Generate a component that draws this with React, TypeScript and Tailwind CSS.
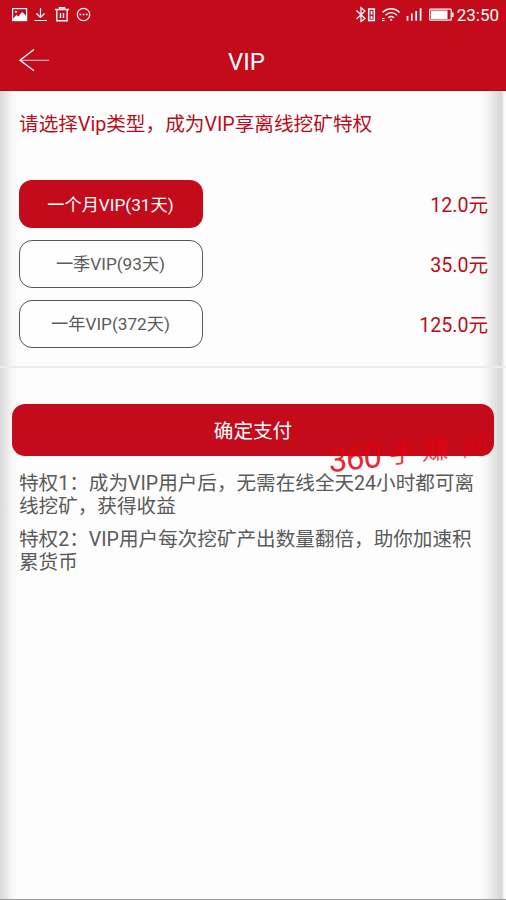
const plans = [
  { name: '一个月VIP(31天)', price: '12.0元', active: true },
  { name: '一季VIP(93天)', price: '35.0元', active: false },
  { name: '一年VIP(372天)', price: '125.0元', active: false },
];

function StatusBar() {
  return (
    <div className="flex h-[30px] items-center justify-between pr-[7px] pl-3 text-white">
      <svg width="80" height="30" viewBox="12 0 80 30" fill="none" stroke="#fff" strokeWidth="1.2">
        <rect x="12.6" y="8.6" width="14" height="12" />
        <path d="M13 19l3.5-4 2 1.5 3.5-4.5 1.5 1 2.5 3v4H13z" fill="#fff" stroke="none" />
        <path d="M15 11h2v1.5h-2z" fill="#fff" stroke="none" />
        <path d="M40.5 8v9M36.5 13.500l4 4 4-4M34.500 20.500h12.500" />
        <path d="M55 9.500h14M59.500 9.500V7.700h5v1.800M56.800 10v10.800h10.400V10M60.500 13v5M63.500 13v5" strokeWidth="1.4" />
        <circle cx="83.500" cy="14.500" r="6.200" />
        <path d="M79.500 14.500h1.700M82.700 14.500h1.700M85.900 14.500h1.700" strokeWidth="1.600" />
      </svg>
      <div className="flex items-center">
        <svg width="100" height="30" viewBox="355 0 100 30" fill="none" stroke="#fff" strokeWidth="1.200">
          <path d="M356.500 10.500l8.500 8-4 3V7.500l4 3.500-8.500 8" />
          <rect x="368.700" y="9" width="5.600" height="11.500" strokeWidth="1.500" />
          <path d="M371.500 11v3.500M371.500 16v3" strokeWidth="1.800" />
          <path d="M382.500 12.500c5-5 12.500-5 17 0M385.500 15.200c3.500-3.300 8-3.300 11.500 0M388.300 17.800c1.800-1.600 3.800-1.600 5.600 0" strokeWidth="1.500" />
          <circle cx="391.200" cy="19.800" r="1.100" fill="#fff" stroke="none" />
          <path d="M382 18.500h2.500M382 20.500h2.500" />
          <path d="M407.500 16v4.700M411.800 13.500v7.200M416.200 11v9.700M420.600 8.300v12.400" strokeWidth="1.700" />
          <rect x="429.700" y="9.200" width="21.500" height="11" rx="0.800" />
          <path d="M431 10.500h16.500v8.500H431z" fill="#fff" stroke="none" />
          <path d="M452.800 12.500v4.500" strokeWidth="1.500" />
        </svg>
        <span className="ml-[2px] text-[17px] leading-none">23:50</span>
      </div>
    </div>
  );
}

function Watermark() {
  return (
    <div
      aria-hidden="true"
      className="pointer-events-none absolute top-[70px] left-[331px] flex origin-bottom-left rotate-[-6deg] items-center text-[#e8000a]"
    >
      <span className="text-[33px] leading-[44px] tracking-[-1px] opacity-85 -skew-x-3">360</span>
      <span className="ml-[8px] text-[26px] leading-[46px] opacity-80 -skew-x-6">手</span>
      <span className="ml-[7px] text-[27px] leading-[46px] opacity-75 -skew-x-6">赚</span>
      <span className="ml-[13px] text-[26px] leading-[44px] opacity-60 -skew-x-6">网</span>
    </div>
  );
}

export default function App() {
  return (
    <div className="flex h-[900px] w-[506px] flex-col overflow-hidden bg-[#fdfdfd] font-[Roboto,'Noto_Sans_CJK_SC',sans-serif] text-[19.6px] text-[#5a5a5a]">
      <header className="h-[91px] shrink-0 border-b border-[#a90b19] bg-[#c40b1b] text-white">
        <StatusBar />
        <div className="grid h-[60px] grid-cols-3 items-center">
          <svg className="ml-[18px]" width="32" height="24" viewBox="18 48 32 24" fill="none" stroke="#fff">
            <path d="M34 49.500L20 60.300l14 10.500" strokeWidth="1.300" />
            <path d="M20 60.300h29" strokeWidth="1" opacity=".8" />
          </svg>
          <h1 className="pt-[3px] pr-[13px] text-center text-[24px] leading-none">VIP</h1>
        </div>
      </header>
      <main className="flex grow flex-col border-b border-[#999] bg-[linear-gradient(to_right,#dadada_0px,#e4e4e4_5px,#f6f6f6_12px,#fdfdfd_18px,#fdfdfd_480px,#f5f5f5_487px,#e4e4e4_494px,#d7d7d7_501px,#e8e8e8_503px,#fafafa_504px,#fafafa_506px)]">
        <section className="h-[277px] border-b-2 border-[#ececec] pr-[18px] pl-[19px] pt-[21px]">
          <h2 className="text-[19.65px] leading-[26px] text-[#b80d1c]">请选择Vip类型，成为VIP享离线挖矿特权</h2>
          <div className="-ml-[0.5px] mt-[42px] flex flex-col gap-[12px]">
            {plans.map((plan) => (
              <div key={plan.name} className="flex items-center justify-between">
                <button
                  className={
                    plan.active
                      ? 'h-[48px] w-[184px] rounded-[13px] bg-[#c40b1b] pt-[3px] text-[17.200px] text-white'
                      : 'h-[48px] w-[184px] rounded-[13px] border border-[#555] bg-[#fefefe] pt-[2px] text-[17.200px] text-[#5a5a5a]'
                  }
                >
                  {plan.name}
                </button>
                <span className="pt-[3px] leading-6 text-[#b80d1c]">{plan.price}</span>
              </div>
            ))}
          </div>
        </section>
        <section className="relative px-[12px] pt-[36px]">
          <button className="block h-[52px] w-[482px] rounded-[13px] bg-[#c40b1b] pt-[4px] text-white">确定支付</button>
          <Watermark />
          <div className="relative flex flex-col gap-[10px] px-[7px] pt-[16px] leading-[23px]">
            <p className="whitespace-nowrap">
              特权1：成为VIP用户后，无需在线全天24小时都可离
              <br />
              线挖矿，获得收益
            </p>
            <p className="whitespace-nowrap">
              特权2：VIP用户每次挖矿产出数量翻倍，助你加速积
              <br />
              累货币
            </p>
          </div>
        </section>
      </main>
    </div>
  );
}
